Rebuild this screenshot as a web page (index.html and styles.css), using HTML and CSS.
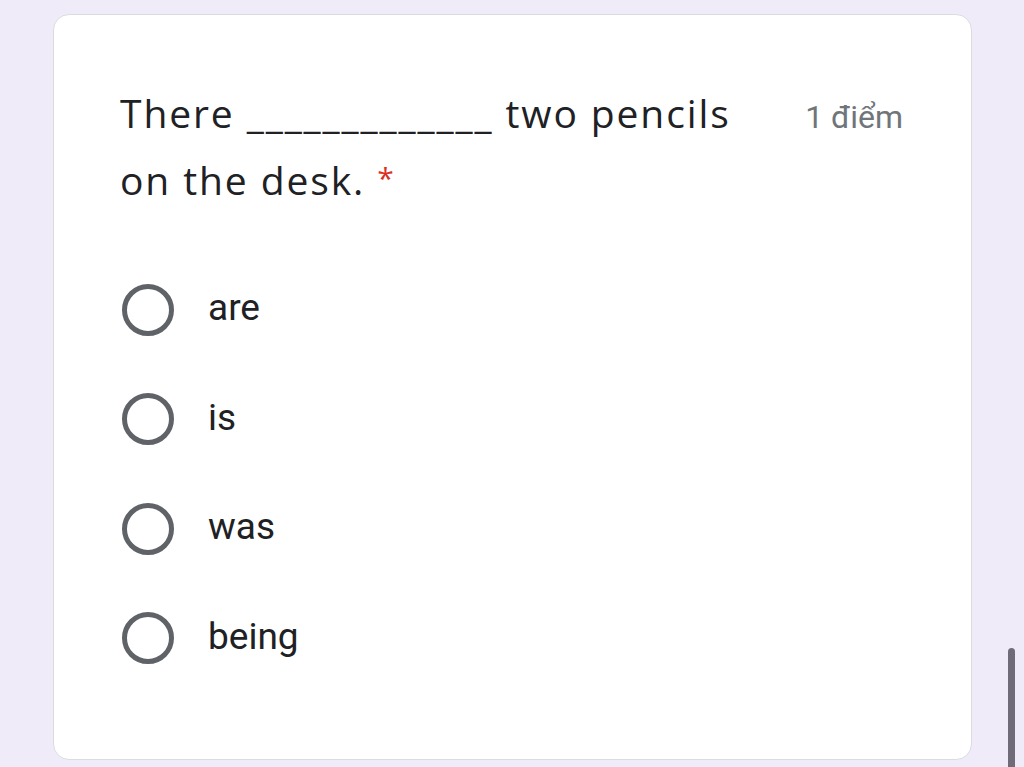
FILE: index.html
```html
<!DOCTYPE html>
<html lang="vi">
<head>
<meta charset="utf-8">
<title>Question</title>
<link rel="stylesheet" href="styles.css">
</head>
<body>
<div class="page">
  <div class="card">
    <div class="header">
      <div class="title">There <span class="blank">_____________</span> two pencils on the desk.<span class="req">*</span></div>
      <div class="points">1 điểm</div>
    </div>
    <div class="options">
      <div class="option"><span class="radio"></span><span class="label">are</span></div>
      <div class="option"><span class="radio"></span><span class="label">is</span></div>
      <div class="option"><span class="radio"></span><span class="label">was</span></div>
      <div class="option"><span class="radio"></span><span class="label">being</span></div>
    </div>
  </div>
  <div class="scrollbar"></div>
</div>
</body>
</html>
```
FILE: styles.css
```css
html, body {
  margin: 0;
  padding: 0;
  background: #f0ebf8;
  height: 100%;
  overflow: hidden;
}
.page {
  padding: 14px 0 0 53px;
  font-family: Roboto, "Noto Sans", sans-serif;
  color: #202124;
}
.card {
  box-sizing: border-box;
  width: 919px;
  height: 746px;
  background: #ffffff;
  border: 1px solid #dadce0;
  border-radius: 16px;
  padding: 64px 68px 0 66px;
}
.header {
  display: flex;
  align-items: baseline;
  justify-content: space-between;
}
.title {
  width: 650px;
  font-family: "Open Sans", Roboto, sans-serif;
  font-size: 39px;
  letter-spacing: 1.9px;
  line-height: 67px;
  color: #202124;
}
.req {
  color: #d93025;
  font-size: 30px;
  letter-spacing: 0;
  margin-left: 12px;
  position: relative;
  top: -6px;
}
.points {
  font-size: 32px;
  color: #70757a;
}
.options {
  margin-top: 38px;
  display: flex;
  flex-direction: column;
}
.option {
  height: 109.5px;
  display: flex;
  align-items: center;
}
.radio {
  box-sizing: border-box;
  width: 52px;
  height: 52px;
  border: 5px solid #5f6368;
  border-radius: 50%;
  margin-left: 2px;
  flex: none;
}
.label {
  margin-left: 34px;
  margin-bottom: 4px;
  font-size: 37px;
  color: #202124;
}
.scrollbar {
  position: absolute;
  left: 1008px;
  top: 648px;
  width: 7px;
  bottom: 0;
  background: #6f6b78;
  border-radius: 4px 4px 0 0;
}
```
